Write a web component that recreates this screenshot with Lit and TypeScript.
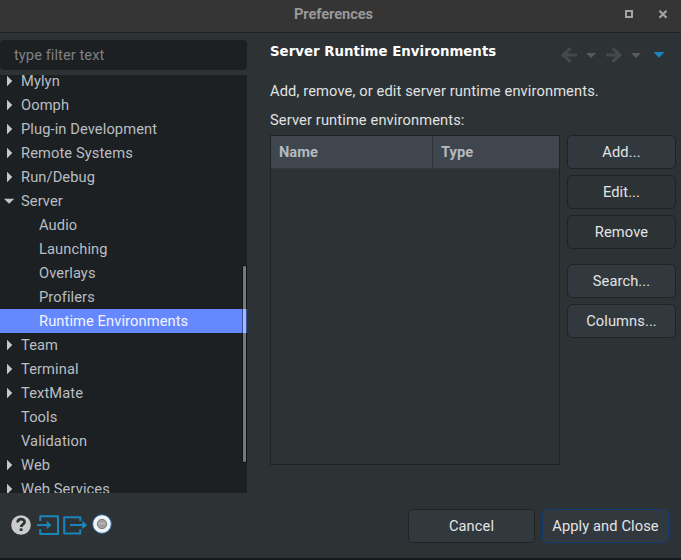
import { LitElement, html, css, svg } from "lit";
import { customElement, property } from "lit/decorators.js";
import { classMap } from "lit/directives/class-map.js";

type Node = { label: string; arrow?: "closed" | "open"; child?: boolean; selected?: boolean };

const NODES: Node[] = [
  { label: "Mylyn", arrow: "closed" },
  { label: "Oomph", arrow: "closed" },
  { label: "Plug-in Development", arrow: "closed" },
  { label: "Remote Systems", arrow: "closed" },
  { label: "Run/Debug", arrow: "closed" },
  { label: "Server", arrow: "open" },
  { label: "Audio", child: true },
  { label: "Launching", child: true },
  { label: "Overlays", child: true },
  { label: "Profilers", child: true },
  { label: "Runtime Environments", child: true, selected: true },
  { label: "Team", arrow: "closed" },
  { label: "Terminal", arrow: "closed" },
  { label: "TextMate", arrow: "closed" },
  { label: "Tools" },
  { label: "Validation" },
  { label: "Web", arrow: "closed" },
  { label: "Web Services", arrow: "closed" },
];

@customElement("pref-button")
class PrefButton extends LitElement {
  @property({ type: Boolean, reflect: true }) disabled = false;
  @property({ type: Boolean, reflect: true }) primary = false;
  static styles = css`
    :host { display: block; height: 34px; }
    button {
      display: block; box-sizing: border-box; width: 100%; height: 34px; padding: 0;
      border: 1px solid #202223; border-radius: 5px; background: #31383e;
      color: #e2e4e5; font: inherit; letter-spacing: inherit; white-space: nowrap;
    }
    :host([disabled]) button { background: #2d3235; }
    :host([primary]) button { border-color: #133a74; }
  `;
  render() {
    return html`<button><slot></slot></button>`;
  }
}

@customElement("pref-tree")
class PrefTree extends LitElement {
  static styles = css`
    :host { display: block; position: relative; width: 247px; height: 418px; overflow: hidden; background: #1c2022; }
    .rows { margin-top: -6px; }
    .row { display: flex; align-items: center; height: 24px; color: #b9bec3; line-height: 24px; white-space: nowrap; }
    .row svg { width: 21px; height: 24px; flex: none; fill: #c3c7cb; }
    .gap { width: 21px; flex: none; }
    .child .gap { width: 39px; }
    .selected { background: #6688ff; color: #f2f5ff; }
    .bar { position: absolute; right: 0; top: 190px; width: 5px; height: 198px; box-sizing: border-box;
      background: rgba(255, 255, 255, 0.4); border: 1px solid rgba(0, 0, 0, 0.4); background-clip: padding-box;
      border-radius: 2px; }
  `;
  render() {
    return html`<div class="rows">
        ${NODES.map(
          (n) => html`<div class=${classMap({ row: true, child: !!n.child, selected: !!n.selected })}>
            ${n.arrow
              ? html`<svg viewBox="0 0 21 24">
                  ${n.arrow === "open" ? svg`<path d="M4 9.7h10.2l-5.1 5z" />` : svg`<path d="M7 6.8v10.4l5.3-5.2z" />`}
                </svg>`
              : html`<span class="gap"></span>`}
            <span>${n.label}</span>
          </div>`
        )}
      </div>
      <div class="bar"></div>`;
  }
}

@customElement("app-root")
class AppRoot extends LitElement {
  static styles = css`
    :host {
      display: flex; flex-direction: column; box-sizing: border-box; width: 681px; height: 560px; overflow: hidden;
      background: #2d3235; border-bottom: 2px solid #17191b; color: #e0e2e3;
      font: 14.667px Roboto, "Noto Sans", sans-serif; letter-spacing: 0.1px;
    }
    header { display: flex; align-items: center; box-sizing: border-box; height: 33px; flex: none;
      background: #353535; border-bottom: 1px solid #202223; padding-bottom: 4px; }
    .title { width: 667px; text-align: center; margin-right: -667px; font-weight: 700; color: #989898; letter-spacing: -0.08px; }
    .win { margin-left: auto; width: 56px; height: 28px; }
    main { display: flex; height: 460px; flex: none; }
    .left { width: 247px; padding-top: 7px; flex: none; }
    .filter { display: block; box-sizing: border-box; width: 247px; height: 30px; margin-bottom: 5px; border: 0;
      border-radius: 4px; background: #1c2022; padding: 0 14px; font: inherit; letter-spacing: 0.06px; }
    .filter::placeholder { color: #7f8182; opacity: 1; }
    .right { flex: 1; padding: 7px 5px 0 23px; }
    .heading { display: flex; height: 30px; }
    h1 { margin: 0; font: bold 13.333px/23px "DejaVu Sans", sans-serif; color: #fff; letter-spacing: 0.02px; white-space: nowrap; }
    .nav { width: 121px; height: 30px; margin-left: auto; margin-right: -5px; flex: none; }
    p { margin: 0; line-height: 20px; white-space: nowrap; letter-spacing: 0.12px; }
    .desc { margin-top: 11px; }
    .label { margin-top: 9px; }
    .body { display: flex; gap: 7px; margin-top: 5px; }
    .table { box-sizing: border-box; width: 290px; height: 330px; border: 1px solid #202223; }
    .head { display: flex; height: 33px; box-sizing: border-box; background: #3f464d; border-bottom: 1px solid #353638;
      line-height: 32px; font-weight: 700; color: #b4bac0; letter-spacing: 0; }
    .head span { padding-left: 8px; }
    .head .name { box-sizing: border-box; width: 162px; border-right: 1px solid #303438; }
    .buttons { display: flex; flex-direction: column; gap: 6px; width: 109px; }
    .buttons .group { margin-top: 9px; }
    footer { display: flex; flex: 1; padding: 16px 12px 0 8px; }
    .tools { width: 108px; height: 34px; }
    .actions { display: flex; gap: 7px; margin-left: auto; }
    .actions pref-button { width: 127px; }
  `;
  render() {
    return html`
      <header>
        <div class="title">Preferences</div>
        <svg class="win" viewBox="625 0 56 28">
          <rect x="626" y="11" width="6" height="6" fill="none" stroke="#a4a4a4" stroke-width="2" />
          <path d="M659.5 10.7l7 7m0-7l-7 7" stroke="#a4a4a4" stroke-width="2.2" />
        </svg>
      </header>
      <main>
        <section class="left">
          <input class="filter" placeholder="type filter text" />
          <pref-tree></pref-tree>
        </section>
        <section class="right">
          <div class="heading">
            <h1>Server Runtime Environments</h1>
            <svg class="nav" viewBox="560 40 121 30">
              <path d="M577 55h-13m6.5-6.8L563.2 55l7.3 6.8" fill="none" stroke="#45494c" stroke-width="3.2" />
              <path d="M606 55h13m-6.5-6.8l7.3 6.8-7.3 6.8" fill="none" stroke="#45494c" stroke-width="3.2" />
              <path d="M586 53h10l-5 5zM631 53h10l-5 5z" fill="#5b5a59" />
              <path d="M653.5 52h11l-5.5 5.7z" fill="#1b85bb" />
            </svg>
          </div>
          <p class="desc">Add, remove, or edit server runtime environments.</p>
          <p class="label">Server runtime environments:</p>
          <div class="body">
            <div class="table">
              <div class="head"><span class="name">Name</span><span>Type</span></div>
            </div>
            <div class="buttons">
              <pref-button>Add...</pref-button>
              <pref-button disabled>Edit...</pref-button>
              <pref-button disabled>Remove</pref-button>
              <pref-button class="group">Search...</pref-button>
              <pref-button>Columns...</pref-button>
            </div>
          </div>
        </section>
      </main>
      <footer>
        <svg class="tools" viewBox="8 509 108 34">
          <circle cx="21" cy="525" r="9.8" fill="#cbcbcb" />
          <path d="M17.6 522.6c0-4.6 7-4.4 7-.7 0 2.5-3.4 2.4-3.4 5" fill="none" stroke="#2d3235" stroke-width="2.7" />
          <rect x="19.7" y="528.4" width="2.8" height="2.6" fill="#2d3235" />
          <g fill="none" stroke="#1b85bb" stroke-width="2" stroke-linejoin="round">
            <path d="M40.2 521V516.3H58V534H40.2V529.3M37 525h11" />
            <path d="M80.3 521V517.2H64.2V533.6H80.3V529.3M70 525h13" />
          </g>
          <path d="M46.7 520.8v8.4l4.8-4.2zM82.3 520.8v8.4l4.8-4.2z" fill="#1b85bb" />
          <circle cx="102" cy="524" r="9.3" fill="#f1f4f7" stroke="#2a6ba8" stroke-width=".9" />
          <circle cx="102" cy="524" r="4.7" fill="#a09f9e" stroke="#777" stroke-width="1" />
          <path d="M98.5 523.5h7" stroke="#bdbdbd" stroke-width="1.6" />
        </svg>
        <div class="actions">
          <pref-button>Cancel</pref-button>
          <pref-button primary>Apply and Close</pref-button>
        </div>
      </footer>
    `;
  }
}
